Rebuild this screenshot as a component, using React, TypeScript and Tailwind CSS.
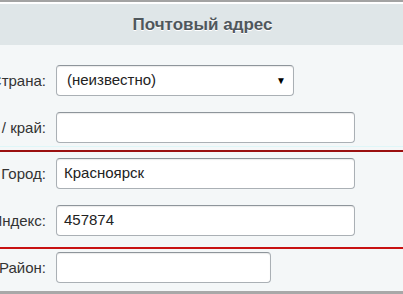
import React from "react";

const inputCls =
  "h-[31px] bg-white border border-[#aab0b5] border-t-[#8e959b] rounded-[4px] shadow-[inset_0_1px_1px_rgba(0,0,0,0.08)] px-[7px] flex items-center text-[15px] text-[#222]";

function Label({ children }: { children: React.ReactNode }) {
  return (
    <div className="w-[46px] shrink-0 flex justify-end overflow-visible">
      <span className="whitespace-nowrap text-[15px] text-[#333] leading-none">{children}</span>
    </div>
  );
}

export default function App() {
  return (
    <div
      className="w-[403px] h-[294px] overflow-hidden bg-[#f4f7f8] flex flex-col"
      style={{ fontFamily: '"Liberation Sans", Arial, sans-serif' }}
    >
      <div className="h-[2px] bg-[#a3a3a3] shrink-0" />
      <div className="h-[2px] bg-white shrink-0" />
      <div className="h-[41px] bg-[#dfe6e8] shrink-0 flex items-center justify-center">
        <span className="text-[17px] font-bold text-[#4f575c] [text-shadow:0_1px_0_#ffffff] pl-[2px] pt-[1px]">
          Почтовый адрес
        </span>
      </div>
      <div className="flex flex-col pt-[20px] shrink-0">
        <div className="flex items-center gap-[10px]">
          <Label>Страна:</Label>
          <div className={inputCls + " w-[238px] justify-between pl-[10px] pr-[7px]"}>
            <span>(неизвестно)</span>
            <span className="text-[10px] text-black leading-none">▼</span>
          </div>
        </div>
        <div className="flex items-center gap-[10px] mt-[16px]">
          <Label>Регион / край:</Label>
          <div className={inputCls + " w-[299px]"} />
        </div>
        <div className="h-[1px] mt-[3px] bg-[#dff6f8]" />
        <div className="mt-[3px] h-[2px] bg-[#9a1010]" />
        <div className="flex items-center gap-[10px] mt-[6px]">
          <Label>Город:</Label>
          <div className={inputCls + " w-[299px]"}>Красноярск</div>
        </div>
        <div className="flex items-center gap-[10px] mt-[16px]">
          <Label>Индекс:</Label>
          <div className={inputCls + " w-[299px]"}>457874</div>
        </div>
        <div className="mt-[11px] h-[2px] bg-[#c81212]" />
        <div className="flex items-center gap-[10px] mt-[3px]">
          <Label>Район:</Label>
          <div className={inputCls + " w-[215px]"} />
        </div>
      </div>
      <div className="flex-1" />
      <div className="h-[3px] bg-[#a8a8a8] shrink-0" />
    </div>
  );
}
